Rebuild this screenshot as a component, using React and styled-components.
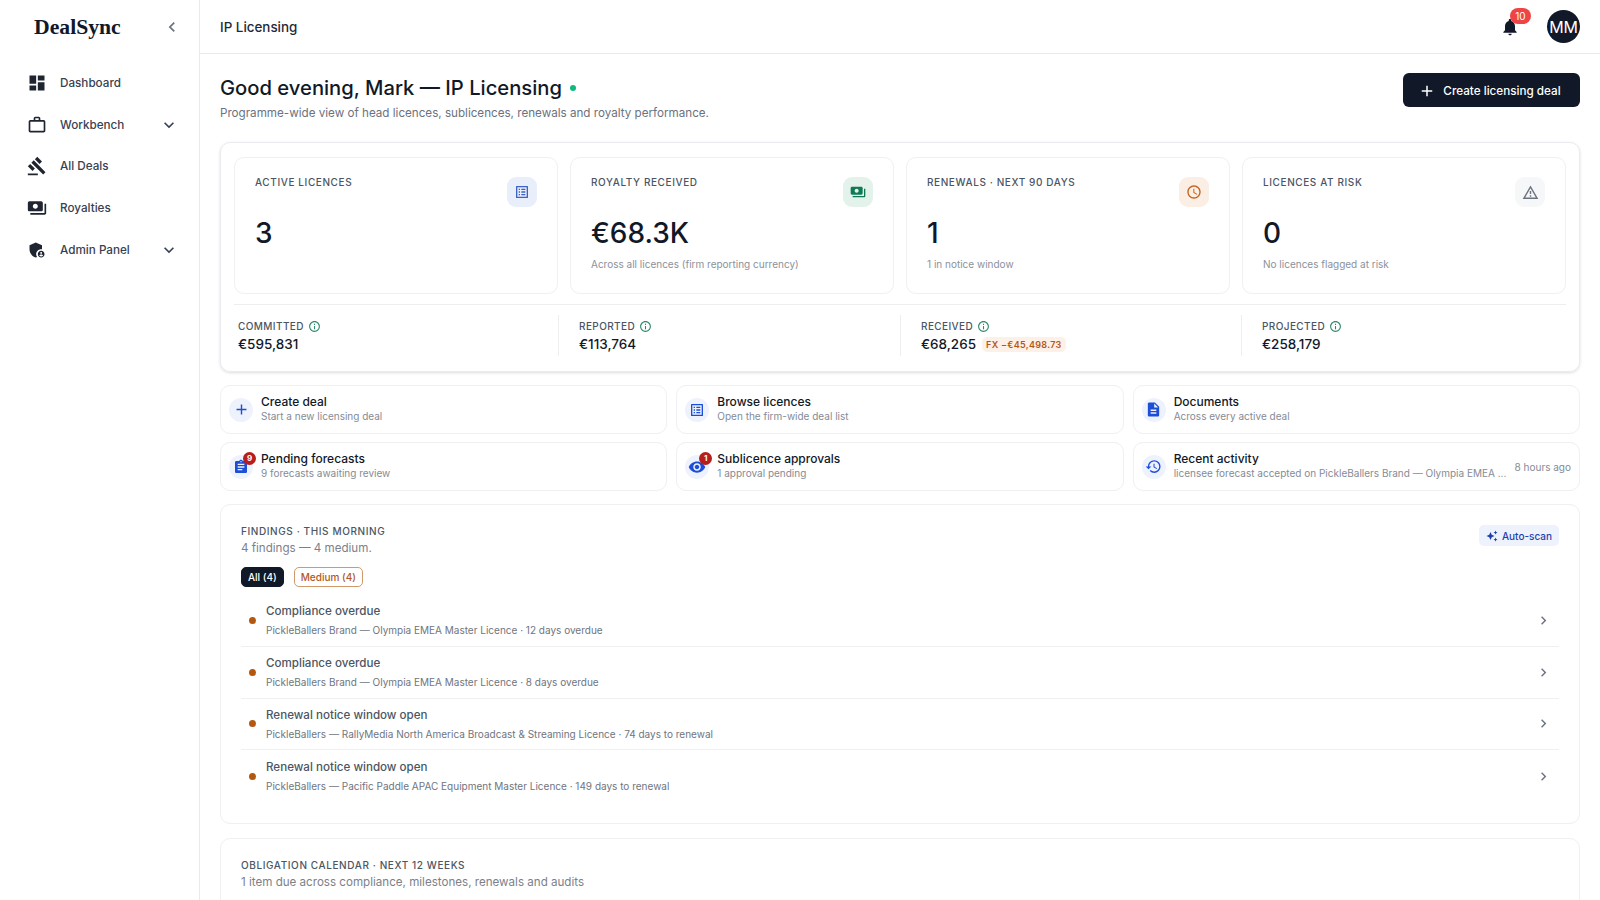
import React from "react";
import styled, { createGlobalStyle } from "styled-components";
import {
  MdDashboard, MdWorkOutline, MdGavel, MdPayments, MdAdminPanelSettings, MdExpandMore, MdChevronLeft, MdChevronRight,
  MdNotifications, MdAdd, MdOutlineListAlt, MdAccessTime, MdOutlineWarningAmber, MdInfoOutline, MdDescription,
  MdAssignment, MdVisibility, MdHistory, MdAutoAwesome,
} from "react-icons/md";

const Global = createGlobalStyle`
  html, body { margin: 0; padding: 0; height: 100%; background: #fff; overflow: hidden; }
  body { font-family: Inter, "Liberation Sans", sans-serif; color: #111827; }
  * { box-sizing: border-box; }
`;

const Shell = styled.div`display: flex; height: 900px; overflow: hidden;`;
const Sidebar = styled.aside`width: 200px; flex: none; border-right: 1px solid #e8eaed; background: #fff;`;
const Brand = styled.div`height: 54px; padding: 0 17px 0 34px; display: flex; align-items: center; justify-content: space-between;`;
const Logo = styled.span`font-family: "Liberation Serif", serif; font-weight: 700; font-size: 21.7px; color: #111827;`;
const Nav = styled.nav`display: flex; flex-direction: column; padding-top: 8px;`;
const NavItem = styled.div`
  height: 41.7px; display: flex; align-items: center; padding: 0 20px 0 27px; gap: 13px; font-size: 11.7px; color: #374151; font-weight: 500;
  & > svg:first-child { color: #1f2530; flex: none; }
  span { flex: 1; }
`;
const Main = styled.main`flex: 1; min-width: 0; display: flex; flex-direction: column;`;
const Header = styled.header`height: 54px; flex: none; border-bottom: 1px solid #e8eaed; padding: 0 20px; display: flex; align-items: center; justify-content: space-between;`;
const Crumb = styled.div`font-size: 13.4px; font-weight: 500; color: #1f2937;`;
const HeaderRight = styled.div`display: flex; align-items: center; gap: 27px;`;
const Bell = styled.div`position: relative; display: flex; color: #111827;`;
const BellBadge = styled.span`position: absolute; top: -9px; left: 10px; width: 21px; height: 16px; border-radius: 8px; background: #ef4444; color: #fff; font-size: 10px; display: flex; align-items: center; justify-content: center;`;
const Avatar = styled.div`width: 33px; height: 33px; border-radius: 50%; background: #111827; color: #fff; font-size: 16px; display: flex; align-items: center; justify-content: center; letter-spacing: -0.3px;`;
const Content = styled.div`padding: 19px 20px 0; display: flex; flex-direction: column; overflow: hidden; & > * { flex: none; }`;
const Welcome = styled.div`display: flex; justify-content: space-between; align-items: flex-start; height: 69px;`;
const Title = styled.h1`margin: 0; font-size: 20.2px; font-weight: 500; line-height: 29px; color: #111827; display: flex; align-items: center; gap: 8px;`;
const LiveDot = styled.i`width: 6px; height: 6px; border-radius: 50%; background: #10b981;`;
const Sub = styled.p`margin: 4px 0 0; font-size: 11.65px; color: #6b7280;`;
const PrimaryButton = styled.button`
  height: 34px; margin-top: 0; width: 177px; border: 0; border-radius: 6px; background: #111827; color: #fff; font: 500 11.7px Inter, sans-serif;
  display: flex; align-items: center; justify-content: center; gap: 7px; padding: 1px 4px 0 0;
`;
const Overview = styled.section`border: 1px solid #e9ebee; border-radius: 10px; padding: 14px 13px 0; height: 230px; box-shadow: 0 1px 3px rgba(17,24,39,.14);`;
const KpiGrid = styled.div`display: grid; grid-template-columns: repeat(4, minmax(0, 1fr)); gap: 12px;`;
const Kpi = styled.div`height: 137px; border: 1px solid #eef0f2; border-radius: 10px; padding: 18px 20px 0 20px; position: relative;`;
const KpiLabel = styled.div`font-size: 10px; letter-spacing: .6px; color: #4b5563; font-weight: 500; line-height: 13px;`;
const KpiValue = styled.div`font-size: 28px; font-weight: 500; line-height: 34px; color: #111827; margin-top: 27px;`;
const KpiNote = styled.div`font-size: 10px; color: #8b919b; margin-top: 8px;`;
const KpiIcon = styled.div`
  position: absolute; top: 19px; right: 20px; width: 30px; height: 30px; border-radius: 9px; display: flex; align-items: center; justify-content: center;
  background: ${p => p.$bg}; color: ${p => p.$fg};
`;
const Stats = styled.div`display: grid; grid-template-columns: 324px 342px 341px minmax(0, 1fr); margin-top: 10px; border-top: 1px solid #eceef0; padding-top: 10px;`;
const Stat = styled.div`
  height: 41px; padding-left: ${p => p.$first ? "4px" : "20px"}; border-left: ${p => p.$first ? "0" : "1px solid #eceef0"};
`;
const StatLabel = styled.div`font-size: 10px; letter-spacing: .4px; color: #4b5563; font-weight: 500; display: flex; align-items: center; gap: 4px; line-height: 16px; margin-top: 3px; svg { color: #2f8a68; }`;
const StatValue = styled.div`font-size: 13.5px; font-weight: 500; color: #111827; display: flex; align-items: center; gap: 6px; line-height: 19px; margin-top: 1px;`;
const FxPill = styled.span`font-size: 9px; font-weight: 600; letter-spacing: .3px; line-height: 11px; color: #b4571a; background: #fdf0e6; border-radius: 5px; padding: 2px 4px;`;
const ActionGrid = styled.div`display: grid; grid-template-columns: repeat(3, minmax(0, 1fr)); gap: 8px 9px; margin-top: 13px;`;
const Action = styled.div`height: 49px; border: 1px solid #eef0f2; border-radius: 10px; padding: 0 8px; display: flex; align-items: center; gap: 8px;`;
const ActionIcon = styled.div`position: relative; width: 24px; height: 24px; border-radius: 50%; background: #eef2fc; color: #1d4ed8; flex: none; display: flex; align-items: center; justify-content: center;`;
const CountBadge = styled.span`position: absolute; top: -3px; right: -3px; width: 13px; height: 13px; border-radius: 50%; background: #b91c1c; color: #fff; font-size: 8px; font-weight: 700; display: flex; align-items: center; justify-content: center;`;
const ActionText = styled.div`min-width: 0; flex: 1; padding-bottom: 2px;`;
const ActionTitle = styled.div`font-size: 12px; font-weight: 500; color: #111827; line-height: 16px;`;
const ActionSub = styled.div`font-size: 10px; color: #858b95; line-height: 13px; white-space: nowrap;`;
const ActionTime = styled.span`font-size: 10px; color: #858b95; flex: none;`;
const Panel = styled.section`border: 1px solid #eef0f2; border-radius: 10px; padding: 20px 20px 0; margin-top: ${p => p.$gap}; height: ${p => p.$h};`;
const PanelHead = styled.div`display: flex; justify-content: space-between; align-items: flex-start;`;
const Eyebrow = styled.div`font-size: 10px; letter-spacing: .6px; font-weight: 500; color: #4b5563; line-height: 13px;`;
const PanelSub = styled.div`font-size: 11.6px; color: #7b818b; margin-top: 2px; line-height: 16px;`;
const ScanButton = styled.div`height: 21px; padding: 0 7px; border-radius: 5px; background: #eef2fc; color: #1e40af; font-size: 10px; font-weight: 500; display: flex; align-items: center; gap: 4px;`;
const Filters = styled.div`display: flex; gap: 10px; margin-top: 11px;`;
const Chip = styled.div`
  height: 20px; padding: 0 6px; border-radius: 5px; font-size: 10px; font-weight: 500; display: flex; align-items: center;
  background: ${p => p.$active ? "#111827" : "#fff"}; color: ${p => p.$active ? "#fff" : "#b4571a"}; border: 1px solid ${p => p.$active ? "#111827" : "#d19a6a"};
`;
const Findings = styled.div`margin-top: 8px;`;
const Finding = styled.div`height: 51.8px; display: flex; align-items: center; padding: 0 7px 0 8px; border-bottom: ${p => p.$last ? "0" : "1px solid #eef0f2"}; svg { color: #6b7280; flex: none; }`;
const Dot = styled.i`width: 7px; height: 7px; border-radius: 50%; background: #b4570f; margin-right: 10px; flex: none;`;
const FindingText = styled.div`flex: 1;`;
const FindingTitle = styled.div`font-size: 11.6px; color: #4b5563; font-weight: 500; line-height: 16px;`;
const FindingSub = styled.div`font-size: 10px; color: #6f7580; line-height: 14px; margin-top: 4px;`;

const actions = [
  { icon: <MdAdd size={17} />, title: "Create deal", sub: "Start a new licensing deal" },
  { icon: <MdOutlineListAlt size={16} />, title: "Browse licences", sub: "Open the firm-wide deal list" },
  { icon: <MdDescription size={17} />, title: "Documents", sub: "Across every active deal" },
  { icon: <MdAssignment size={16} />, title: "Pending forecasts", sub: "9 forecasts awaiting review", badge: 9 },
  { icon: <MdVisibility size={18} />, title: "Sublicence approvals", sub: "1 approval pending", badge: 1 },
  { icon: <MdHistory size={17} />, title: "Recent activity", sub: "licensee forecast accepted on PickleBallers Brand — Olympia EMEA ...", time: "8 hours ago" },
];
const kpis = [
  { label: "ACTIVE LICENCES", value: "3", icon: <MdOutlineListAlt size={16} />, bg: "#e9eefb", fg: "#3b63c4" },
  { label: "ROYALTY RECEIVED", value: "€68.3K", note: "Across all licences (firm reporting currency)", icon: <MdPayments size={16} />, bg: "#e4f2ec", fg: "#0f7a55" },
  { label: "RENEWALS · NEXT 90 DAYS", value: "1", note: "1 in notice window", icon: <MdAccessTime size={16} />, bg: "#fbeee4", fg: "#c2631d" },
  { label: "LICENCES AT RISK", value: "0", note: "No licences flagged at risk", icon: <MdOutlineWarningAmber size={17} />, bg: "#f6f7f8", fg: "#6b7280" },
];
const findings = [
  ["Compliance overdue", "PickleBallers Brand — Olympia EMEA Master Licence · 12 days overdue"],
  ["Compliance overdue", "PickleBallers Brand — Olympia EMEA Master Licence · 8 days overdue"],
  ["Renewal notice window open", "PickleBallers — RallyMedia North America Broadcast & Streaming Licence · 74 days to renewal"],
  ["Renewal notice window open", "PickleBallers — Pacific Paddle APAC Equipment Master Licence · 149 days to renewal"],
];

export default function App() {
  return (
    <Shell>
      <Global />
      <Sidebar>
        <Brand><Logo>DealSync</Logo><MdChevronLeft size={20} color="#6b7280" /></Brand>
        <Nav>
          <NavItem><MdDashboard size={20} /><span>Dashboard</span></NavItem>
          <NavItem><MdWorkOutline size={20} /><span>Workbench</span><MdExpandMore size={20} /></NavItem>
          <NavItem><MdGavel size={20} /><span>All Deals</span></NavItem>
          <NavItem><MdPayments size={20} /><span>Royalties</span></NavItem>
          <NavItem><MdAdminPanelSettings size={20} /><span>Admin Panel</span><MdExpandMore size={20} /></NavItem>
        </Nav>
      </Sidebar>
      <Main>
        <Header>
          <Crumb>IP Licensing</Crumb>
          <HeaderRight>
            <Bell><MdNotifications size={20} /><BellBadge>10</BellBadge></Bell>
            <Avatar>MM</Avatar>
          </HeaderRight>
        </Header>
        <Content>
          <Welcome>
            <div>
              <Title>Good evening, Mark — IP Licensing <LiveDot /></Title>
              <Sub>Programme-wide view of head licences, sublicences, renewals and royalty performance.</Sub>
            </div>
            <PrimaryButton><MdAdd size={18} />Create licensing deal</PrimaryButton>
          </Welcome>
          <Overview>
            <KpiGrid>
              {kpis.map(k => (
                <Kpi key={k.label}>
                  <KpiLabel>{k.label}</KpiLabel>
                  <KpiValue>{k.value}</KpiValue>
                  {k.note && <KpiNote>{k.note}</KpiNote>}
                  <KpiIcon $bg={k.bg} $fg={k.fg}>{k.icon}</KpiIcon>
                </Kpi>
              ))}
            </KpiGrid>
            <Stats>
              <Stat $first><StatLabel>COMMITTED <MdInfoOutline size={13} /></StatLabel><StatValue>€595,831</StatValue></Stat>
              <Stat><StatLabel>REPORTED <MdInfoOutline size={13} /></StatLabel><StatValue>€113,764</StatValue></Stat>
              <Stat><StatLabel>RECEIVED <MdInfoOutline size={13} /></StatLabel><StatValue>€68,265 <FxPill>FX −€45,498.73</FxPill></StatValue></Stat>
              <Stat><StatLabel>PROJECTED <MdInfoOutline size={13} /></StatLabel><StatValue>€258,179</StatValue></Stat>
            </Stats>
          </Overview>
          <ActionGrid>
            {actions.map(a => (
              <Action key={a.title}>
                <ActionIcon>{a.icon}{a.badge && <CountBadge>{a.badge}</CountBadge>}</ActionIcon>
                <ActionText><ActionTitle>{a.title}</ActionTitle><ActionSub>{a.sub}</ActionSub></ActionText>
                {a.time && <ActionTime>{a.time}</ActionTime>}
              </Action>
            ))}
          </ActionGrid>
          <Panel $gap="13px" $h="320px">
            <PanelHead>
              <div>
                <Eyebrow>FINDINGS · THIS MORNING</Eyebrow>
                <PanelSub>4 findings — 4 medium.</PanelSub>
              </div>
              <ScanButton><MdAutoAwesome size={12} />Auto-scan</ScanButton>
            </PanelHead>
            <Filters><Chip $active>All (4)</Chip><Chip>Medium (4)</Chip></Filters>
            <Findings>
              {findings.map((f, i) => (
                <Finding key={i} $last={i === 3}>
                  <Dot />
                  <FindingText><FindingTitle>{f[0]}</FindingTitle><FindingSub>{f[1]}</FindingSub></FindingText>
                  <MdChevronRight size={17} />
                </Finding>
              ))}
            </Findings>
          </Panel>
          <Panel $gap="14px" $h="120px">
            <Eyebrow>OBLIGATION CALENDAR · NEXT 12 WEEKS</Eyebrow>
            <PanelSub>1 item due across compliance, milestones, renewals and audits</PanelSub>
          </Panel>
        </Content>
      </Main>
    </Shell>
  );
}
